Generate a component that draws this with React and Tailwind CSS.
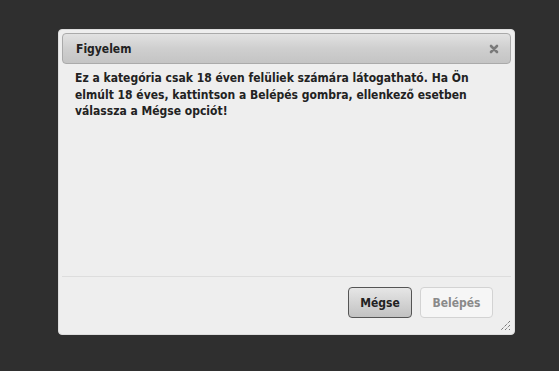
export default function App() {
    return (
        <div
            className="w-[559px] h-[371px] bg-[#2f2f2f] pt-[29px] pl-[58px]"
            style={{ fontFamily: '"DejaVu Sans Condensed", "DejaVu Sans", sans-serif' }}
        >
            {/* Dialog */}
            <div className="relative w-[457px] h-[306px] bg-[#eeeeee] border border-[#dddddd] rounded-[4px] p-[3px] flex flex-col">
                {/* Title bar */}
                <div className="h-[31px] shrink-0 flex items-center justify-between pl-[13px] pr-[11px] border border-[#aaaaaa] rounded-[4px] bg-gradient-to-b from-[#e2e2e2] via-[#cfcfcf] to-[#c4c4c4]">
                    <span className="text-[12px] font-bold text-[#222222]">Figyelem</span>
                    <svg width="10" height="10" viewBox="0 0 10 10">
                        <path d="M2 2 L8 8 M8 2 L2 8" stroke="#7a7a7a" strokeWidth="2.6" strokeLinecap="round" />
                    </svg>
                </div>

                {/* Content */}
                <div className="flex-1 px-[13px] pt-[6px]">
                    <p className="text-[12px] leading-[16.5px] font-bold text-[#222222]">
                        Ez a kategória csak 18 éven felüliek számára látogatható. Ha Ön elmúlt 18 éves, kattintson a Belépés gombra, ellenkező esetben válassza a Mégse opciót!
                    </p>
                </div>

                {/* Buttons */}
                <div className="h-[55px] shrink-0 border-t border-[#dddddd] flex items-start justify-end gap-[8px] pt-[10px] pr-[18px]">
                    <button className="w-[64px] h-[31px] rounded-[4px] border border-[#555555] bg-gradient-to-b from-[#e6e6e6] to-[#c2c2c2] text-[12px] font-bold text-[#222222]">
                        Mégse
                    </button>
                    <button className="w-[73px] h-[31px] rounded-[4px] border border-[#d3d3d3] bg-[#f6f6f6] text-[12px] font-bold text-[#8a8a8a]">
                        Belépés
                    </button>
                </div>

                {/* Resize handle */}
                <svg className="absolute right-[3px] bottom-[3px]" width="12" height="12" viewBox="0 0 12 12">
                    <path d="M11 2 L2 11 M11 6 L6 11 M11 10 L10 11" stroke="#444444" strokeWidth="1" strokeDasharray="1 1" />
                </svg>
            </div>
        </div>
    );
}
